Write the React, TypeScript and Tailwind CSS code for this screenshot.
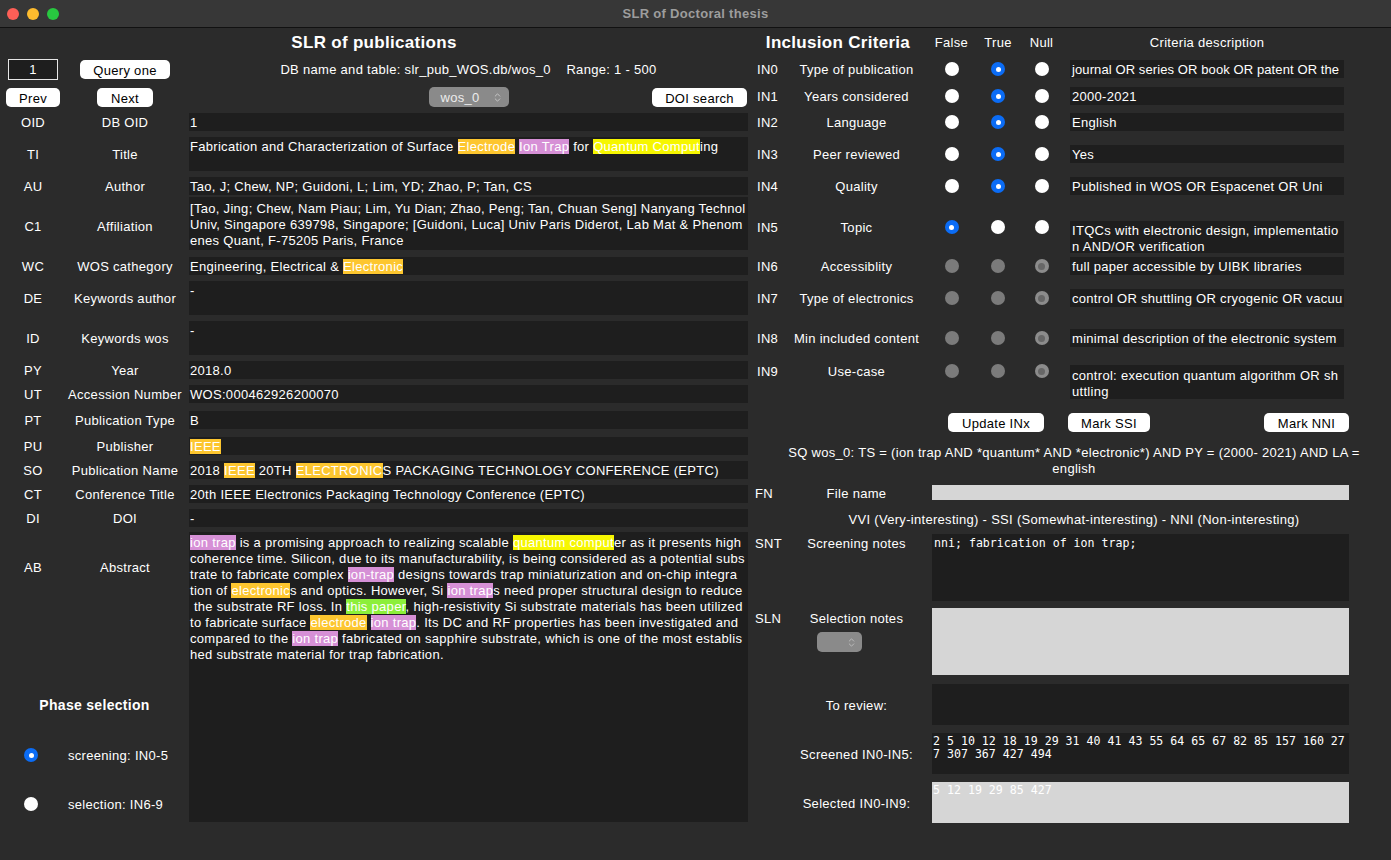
import type { ReactNode } from 'react'
import { ChevronsUpDown } from 'lucide-react'

type RadioState = 'on' | 'off' | 'dis' | 'dison'

const gold = 'bg-[#fdc62f]'
const yellow = 'bg-[#f6f600]'
const pink = 'bg-[#d690d6]'
const green = 'bg-[#8cef3a]'

const Hl = ({ c, children }: { c: string; children: ReactNode }) => <span className={c}>{children}</span>

const Radio = ({ state }: { state: RadioState }) => {
  if (state === 'on')
    return (
      <span className="flex h-[14px] w-[14px] items-center justify-center rounded-full bg-[#0b6cf5]">
        <span className="h-[5px] w-[5px] rounded-full bg-white" />
      </span>
    )
  if (state === 'off') return <span className="block h-[14px] w-[14px] rounded-full bg-white" />
  if (state === 'dis') return <span className="block h-[14px] w-[14px] rounded-full bg-[#7b7b7b]" />
  return (
    <span className="flex h-[14px] w-[14px] items-center justify-center rounded-full bg-[#8c8c8c]">
      <span className="h-[7px] w-[7px] rounded-full bg-[#676767]" />
    </span>
  )
}

const Btn = ({ label, className = '' }: { label: string; className?: string }) => (
  <div className={`h-[19px] rounded-[5px] bg-white pt-[1px] text-center leading-[19px] text-black ${className}`}>{label}</div>
)

type RowProps = {
  code: string
  label: string
  row: string
  field?: string
  lab?: string
  children?: ReactNode
}

// left side: code | label | text field
const Row = ({ code, label, row, field = 'leading-[20px]', lab = 'pt-[2px]', children }: RowProps) => (
  <div className={`flex items-center ${row}`}>
    <div className={`w-[66px] text-center ${lab}`}>{code}</div>
    <div className={`w-[118px] whitespace-nowrap text-center ${lab}`}>{label}</div>
    <div className={`ml-[5px] h-full flex-1 overflow-hidden whitespace-nowrap bg-[#1e1e1e] px-[1px] ${field}`}>{children}</div>
  </div>
)

type CritProps = {
  code: string
  label: string
  radios: RadioState[]
  row: string
  lab?: string
  desc: string
  children: ReactNode
}

// right side: criteria row
const Crit = ({ code, label, radios, row, lab = '', desc, children }: CritProps) => (
  <div className={`flex items-start ${row}`}>
    <div className={`flex h-[18px] items-center ${lab}`}>
      <div className="w-[37px] pl-[9px] pt-[2px]">{code}</div>
      <div className="w-[143px] whitespace-nowrap pt-[2px] text-center">{label}</div>
      <div className="flex w-[47px] justify-center">
        <Radio state={radios[0]} />
      </div>
      <div className="flex w-[46px] justify-center">
        <Radio state={radios[1]} />
      </div>
      <div className="flex w-[41px] justify-center">
        <Radio state={radios[2]} />
      </div>
    </div>
    <div className={`ml-[8px] w-[274px] overflow-hidden whitespace-nowrap bg-[#1e1e1e] px-[2px] ${desc}`}>{children}</div>
  </div>
)

const abstractLines: ReactNode[] = [
  <>
    <Hl c={pink}>ion trap</Hl> is a promising approach to realizing scalable <Hl c={yellow}>quantum comput</Hl>er as it presents high
  </>,
  <>coherence time. Silicon, due to its manufacturability, is being considered as a potential subs</>,
  <>
    trate to fabricate complex <Hl c={pink}>ion-trap</Hl> designs towards trap miniaturization and on-chip integra
  </>,
  <>
    tion of <Hl c={gold}>electronic</Hl>s and optics. However, Si <Hl c={pink}>ion trap</Hl>s need proper structural design to reduce
  </>,
  <>
    {' the substrate RF loss. In '}
    <Hl c={green}>this paper</Hl>, high-resistivity Si substrate materials has been utilized
  </>,
  <>
    to fabricate surface <Hl c={gold}>electrode</Hl> <Hl c={pink}>ion trap</Hl>. Its DC and RF properties has been investigated and
  </>,
  <>
    compared to the <Hl c={pink}>ion trap</Hl> fabricated on sapphire substrate, which is one of the most establis
  </>,
  <>hed substrate material for trap fabrication.</>,
]

const TitleBar = () => (
  <div className="grid h-[28px] grid-cols-[1fr_auto_1fr] items-center border-b border-[#111] bg-[#373737]">
    <div className="flex gap-[8px] pl-[7px]">
      <span className="h-[12px] w-[12px] rounded-full bg-[#fe5f57]" />
      <span className="h-[12px] w-[12px] rounded-full bg-[#febc2e]" />
      <span className="h-[12px] w-[12px] rounded-full bg-[#28c840]" />
    </div>
    <div className="text-[13px] font-bold text-[#9d9d9d]">SLR of Doctoral thesis</div>
    <div />
  </div>
)

const LeftPanel = () => (
  <div className="flex w-[748px] flex-col">
    <div className="flex h-[29px] items-center justify-center text-[17px] font-bold">SLR of publications</div>

    <div className="flex h-[24px] items-center">
      <div className="flex w-[66px] justify-center">
        <div className="h-[21px] w-[50px] border border-[#e6e6e6] bg-[#1e1e1e] text-center leading-[20px]">1</div>
      </div>
      <div className="flex w-[118px] justify-center">
        <Btn label="Query one" className="w-[90px]" />
      </div>
      <div className="ml-[5px] flex-1 whitespace-pre pt-[1px] text-center">DB name and table: slr_pub_WOS.db/wos_0    Range: 1 - 500</div>
    </div>

    <div className="flex h-[32px] items-center">
      <div className="flex w-[66px] justify-center">
        <Btn label="Prev" className="w-[54px]" />
      </div>
      <div className="flex w-[118px] justify-center">
        <Btn label="Next" className="w-[56px]" />
      </div>
      <div className="ml-[5px] grid flex-1 grid-cols-[1fr_auto_1fr] items-center">
        <div />
        <div className="flex h-[20px] w-[80px] items-center justify-between rounded-[5px] bg-[#8a8a8a] pl-[12px] pr-[6px] text-[#ececec]">
          <span className="pt-[1px]">wos_0</span>
          <ChevronsUpDown size={11} strokeWidth={2} color="#c9c9c9" />
        </div>
        <div className="flex justify-end pr-[1px]">
          <Btn label="DOI search" className="w-[95px]" />
        </div>
      </div>
    </div>

    <Row code="OID" label="DB OID" row="h-[18px]">
      1
    </Row>
    <Row code="TI" label="Title" row="mt-[6px] h-[34px]" field="leading-[16px] pt-[2px]">
      Fabrication and Characterization of Surface <Hl c={gold}>Electrode</Hl> <Hl c={pink}>Ion Trap</Hl> for{' '}
      <Hl c={yellow}>Quantum Comput</Hl>ing
    </Row>
    <Row code="AU" label="Author" row="mt-[6px] h-[18px]">
      Tao, J; Chew, NP; Guidoni, L; Lim, YD; Zhao, P; Tan, CS
    </Row>
    <Row code="C1" label="Affiliation" row="mt-[2px] h-[53px]" field="leading-[16px] pt-[4px]" lab="pt-[7px]">
      [Tao, Jing; Chew, Nam Piau; Lim, Yu Dian; Zhao, Peng; Tan, Chuan Seng] Nanyang Technol
      <br />
      Univ, Singapore 639798, Singapore; [Guidoni, Luca] Univ Paris Diderot, Lab Mat &amp; Phenom
      <br />
      enes Quant, F-75205 Paris, France
    </Row>
    <Row code="WC" label="WOS cathegory" row="mt-[7px] h-[18px]">
      Engineering, Electrical &amp; <Hl c={gold}>Electronic</Hl>
    </Row>
    <Row code="DE" label="Keywords author" row="mt-[6px] h-[34px]" field="leading-[16px] pt-[2px]">
      -
    </Row>
    <Row code="ID" label="Keywords wos" row="mt-[6px] h-[34px]" field="leading-[16px] pt-[2px]">
      -
    </Row>
    <Row code="PY" label="Year" row="mt-[6px] h-[18px]">
      2018.0
    </Row>
    <Row code="UT" label="Accession Number" row="mt-[6px] h-[18px]">
      WOS:000462926200070
    </Row>
    <Row code="PT" label="Publication Type" row="mt-[8px] h-[18px]">
      B
    </Row>
    <Row code="PU" label="Publisher" row="mt-[8px] h-[18px]">
      <Hl c={gold}>IEEE</Hl>
    </Row>
    <Row code="SO" label="Publication Name" row="mt-[6px] h-[18px]">
      2018 <Hl c={gold}>IEEE</Hl> 20TH <Hl c={gold}>ELECTRONIC</Hl>S PACKAGING TECHNOLOGY CONFERENCE (EPTC)
    </Row>
    <Row code="CT" label="Conference Title" row="mt-[6px] h-[18px]">
      20th IEEE Electronics Packaging Technology Conference (EPTC)
    </Row>
    <Row code="DI" label="DOI" row="mt-[6px] h-[18px]">
      -
    </Row>

    <div className="mt-[5px] flex items-start">
      <div className="flex w-[189px] flex-col">
        <div className="flex h-[72px] items-center">
          <div className="w-[66px] text-center">AB</div>
          <div className="w-[118px] text-center">Abstract</div>
        </div>
        <div className="mt-[91px] text-center text-[14px] font-bold leading-[20px]">Phase selection</div>
        <div className="mt-[31px] flex h-[18px] items-center pl-[24px]">
          <Radio state="on" />
          <span className="ml-[30px] pt-[1px]">screening: IN0-5</span>
        </div>
        <div className="mt-[31px] flex h-[18px] items-center pl-[24px]">
          <Radio state="off" />
          <span className="ml-[30px] pt-[1px]">selection: IN6-9</span>
        </div>
      </div>
      <div className="h-[290px] flex-1 bg-[#1e1e1e] px-[1px] pt-[3px] leading-[16px]">
        {abstractLines.map((l, i) => (
          <div key={i} className="whitespace-pre">
            {l}
          </div>
        ))}
      </div>
    </div>
  </div>
)

const mono = "font-['DejaVu_Sans_Mono',monospace] text-[11.6px] tracking-normal"

const RightPanel = () => (
  <div className="flex flex-1 flex-col">
    <div className="flex h-[29px] items-center">
      <div className="w-[180px] text-center text-[17px] font-bold">Inclusion Criteria</div>
      <div className="w-[47px] text-center">False</div>
      <div className="w-[46px] text-center">True</div>
      <div className="w-[41px] text-center">Null</div>
      <div className="ml-[8px] w-[274px] text-center">Criteria description</div>
    </div>

    <Crit
      code="IN0"
      label="Type of publication"
      radios={['off', 'on', 'off']}
      row="mt-[3px]"
      desc="h-[18px] leading-[20px] tracking-[0.1px]"
    >
      journal OR series OR book OR patent OR the
    </Crit>
    <Crit code="IN1" label="Years considered" radios={['off', 'on', 'off']} row="mt-[9px]" desc="h-[18px] leading-[20px]">
      2000-2021
    </Crit>
    <Crit code="IN2" label="Language" radios={['off', 'on', 'off']} row="mt-[8px]" desc="h-[18px] leading-[20px]">
      English
    </Crit>
    <Crit code="IN3" label="Peer reviewed" radios={['off', 'on', 'off']} row="mt-[14px]" desc="h-[18px] leading-[20px]">
      Yes
    </Crit>
    <Crit code="IN4" label="Quality" radios={['off', 'on', 'off']} row="mt-[14px]" desc="h-[18px] leading-[20px]">
      Published in WOS OR Espacenet OR Uni
    </Crit>
    <Crit
      code="IN5"
      label="Topic"
      radios={['on', 'off', 'off']}
      row="mt-[26px]"
      lab="mt-[-3px]"
      desc="h-[32px] leading-[16px] pt-[2px]"
    >
      ITQCs with electronic design, implementatio
      <br />n AND/OR verification
    </Crit>
    <Crit code="IN6" label="Accessiblity" radios={['dis', 'dis', 'dison']} row="mt-[4px]" desc="h-[18px] leading-[20px]">
      full paper accessible by UIBK libraries
    </Crit>
    <Crit code="IN7" label="Type of electronics" radios={['dis', 'dis', 'dison']} row="mt-[14px]" desc="h-[18px] leading-[20px]">
      control OR shuttling OR cryogenic OR vacuu
    </Crit>
    <Crit code="IN8" label="Min included content" radios={['dis', 'dis', 'dison']} row="mt-[22px]" desc="h-[18px] leading-[20px]">
      minimal description of the electronic system
    </Crit>
    <Crit
      code="IN9"
      label="Use-case"
      radios={['dis', 'dis', 'dison']}
      row="mt-[18px]"
      lab="mt-[-3px]"
      desc="h-[34px] leading-[16px] pt-[3px]"
    >
      control: execution quantum algorithm OR sh
      <br />
      uttling
    </Crit>

    <div className="mt-[14px] flex">
      <Btn label="Update INx" className="ml-[200px] w-[96px]" />
      <Btn label="Mark SSI" className="ml-[24px] w-[82px]" />
      <Btn label="Mark NNI" className="ml-[114px] w-[85px]" />
    </div>

    <div className="mt-[12px] pl-[9px] pt-[1px] text-center leading-[16px]">
      SQ wos_0: TS = (ion trap AND *quantum* AND *electronic*) AND PY = (2000- 2021) AND LA =
      <br />
      english
    </div>

    <div className="mt-[8px] flex h-[15px] items-center">
      <div className="w-[37px] pl-[7px] pt-[3px]">FN</div>
      <div className="w-[143px] pt-[3px] text-center">File name</div>
      <div className="ml-[4px] h-full w-[417px] bg-[#d6d6d6]" />
    </div>

    <div className="mt-[12px] pl-[9px] text-center leading-[16px]">
      VVI (Very-interesting) - SSI (Somewhat-interesting) - NNI (Non-interesting)
    </div>

    <div className="mt-[6px] flex items-start">
      <div className="flex h-[18px] items-center pt-[2px]">
        <div className="w-[37px] pl-[7px]">SNT</div>
        <div className="w-[143px] text-center">Screening notes</div>
      </div>
      <div className={`ml-[4px] h-[67px] w-[417px] bg-[#1e1e1e] px-[2px] pt-[2px] leading-[14px] ${mono}`}>
        nni; fabrication of ion trap;
      </div>
    </div>

    <div className="mt-[7px] flex items-start">
      <div className="flex flex-col">
        <div className="mt-[1px] flex h-[18px] items-center pt-[2px]">
          <div className="w-[37px] pl-[7px]">SLN</div>
          <div className="w-[143px] text-center">Selection notes</div>
        </div>
        <div className="ml-[69px] mt-[5px] flex h-[20px] w-[45px] items-center justify-end rounded-[5px] bg-[#8a8a8a] pr-[5px]">
          <ChevronsUpDown size={11} strokeWidth={2} color="#bdbdbd" />
        </div>
      </div>
      <div className="ml-[4px] h-[67px] w-[417px] bg-[#d6d6d6]" />
    </div>

    <div className="mt-[9px] flex h-[41px] items-center">
      <div className="w-[37px]" />
      <div className="w-[143px] pt-[2px] text-center">To review:</div>
      <div className="ml-[4px] h-full w-[417px] bg-[#1e1e1e]" />
    </div>

    <div className="mt-[8px] flex h-[41px] items-center">
      <div className="w-[37px]" />
      <div className="w-[143px] whitespace-nowrap pt-[3px] text-center">Screened IN0-IN5:</div>
      <div className={`ml-[4px] h-full w-[417px] whitespace-pre bg-[#1e1e1e] px-[1px] pt-[2px] leading-[13px] ${mono}`}>
        2 5 10 12 18 19 29 31 40 41 43 55 64 65 67 82 85 157 160 27
        <br />7 307 367 427 494
      </div>
    </div>

    <div className="mt-[8px] flex h-[41px] items-center">
      <div className="w-[37px]" />
      <div className="w-[143px] whitespace-nowrap pt-[3px] text-center">Selected IN0-IN9:</div>
      <div className={`ml-[4px] h-full w-[417px] bg-[#d6d6d6] px-[1px] pt-[2px] leading-[13px] text-white ${mono}`}>
        5 12 19 29 85 427
      </div>
    </div>
  </div>
)

export default function App() {
  return (
    <div className="h-[860px] w-[1391px] overflow-hidden bg-[#2b2b2b] font-['Liberation_Sans',Arial,sans-serif] text-[13px] tracking-[0.3px] text-white">
      <TitleBar />
      <div className="flex">
        <LeftPanel />
        <RightPanel />
      </div>
    </div>
  )
}
